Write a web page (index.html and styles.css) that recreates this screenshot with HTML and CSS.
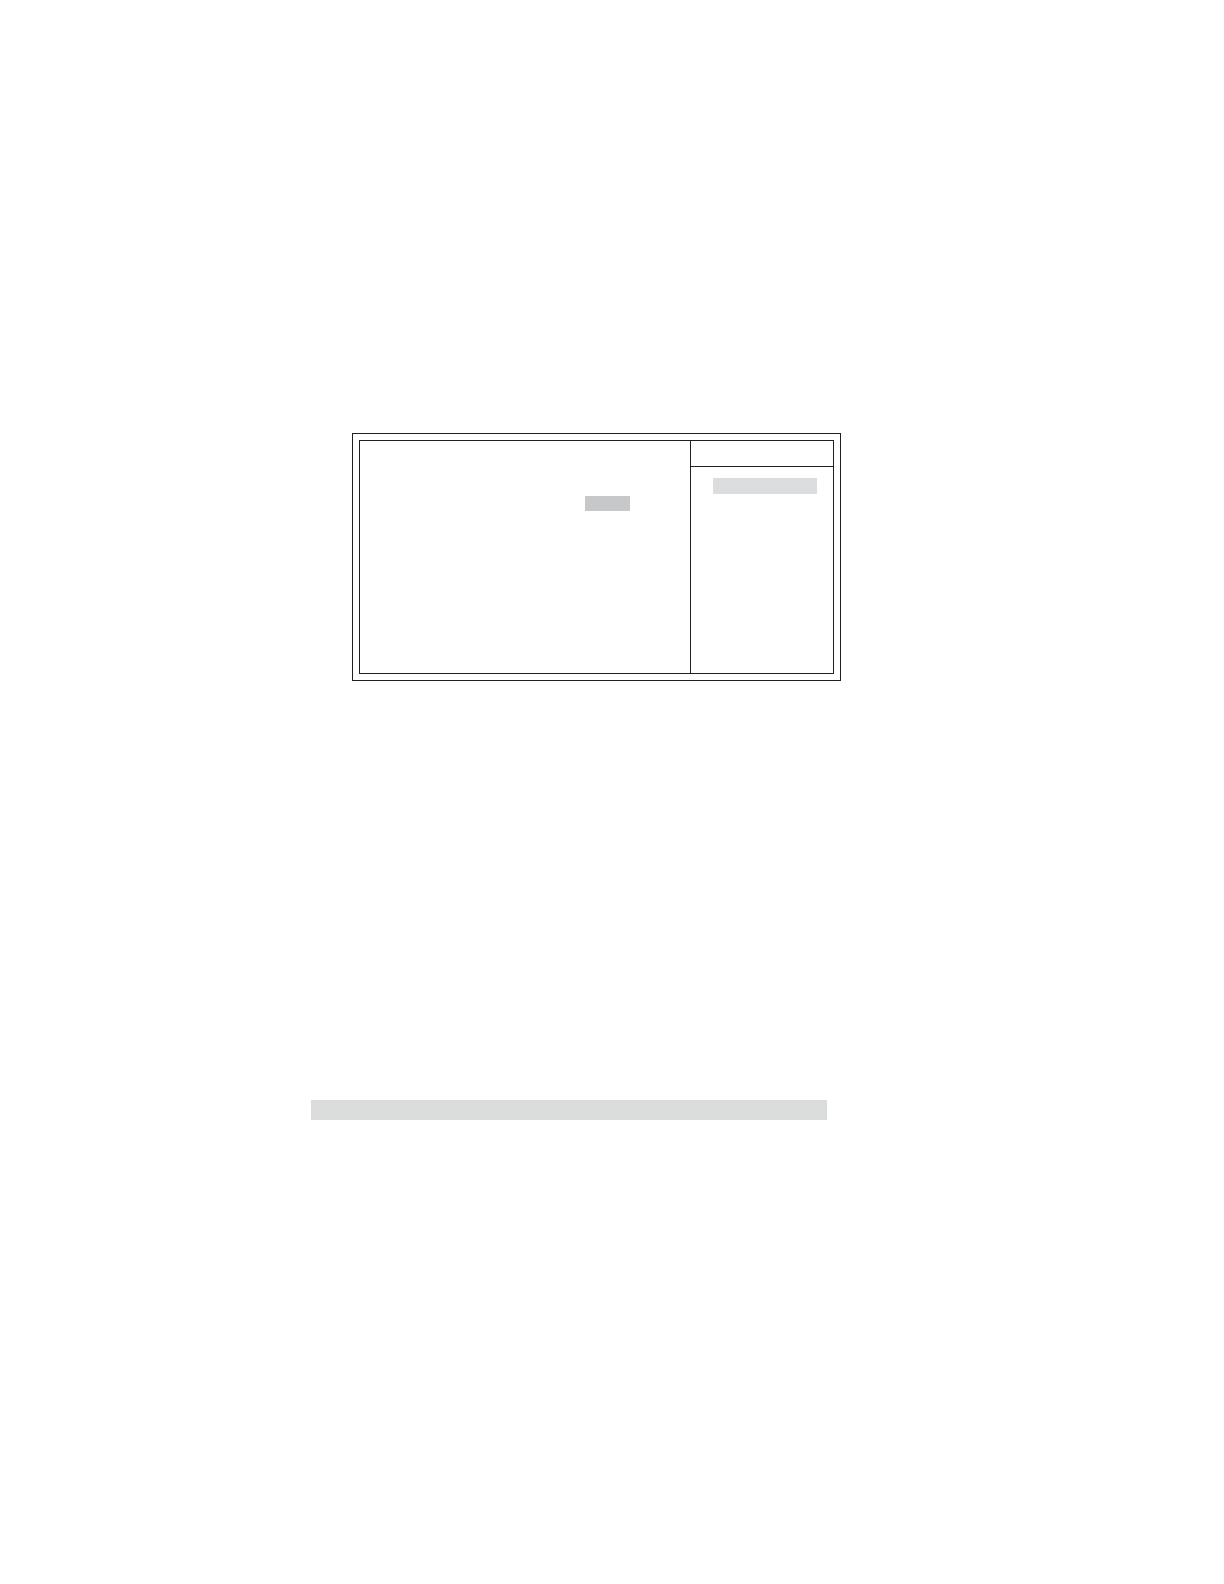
FILE: index.html
```html
<!doctype html>
<html lang="en">
    <head>
        <meta charset="UTF-8"/>
        <title>Setup menu</title>
        <link rel="stylesheet" href="styles.css">
    </head>
    <body>
    <div id="page">
        <div class="screen">
            <div class="inner">
                <div class="options">
                    <div class="selected"></div>
                </div>
                <div class="help">
                    <div class="help-title"></div>
                    <div class="help-body">
                        <div class="menu-level"></div>
                    </div>
                </div>
            </div>
        </div>
        <div class="note"></div>
    </div>
    </body>
</html>
```

FILE: styles.css
```css
* {
    margin: 0px;
    padding: 0px;
    box-sizing: border-box;
}
body {
    background-color: #fff;
}
#page {
    display: grid;
    grid-template-columns: 311fr 41fr 475fr 14fr 383fr;
    align-content: start;
    row-gap: 419px;
    min-height: 100vh;
    padding-top: 433px;
}
/* double frame */
.screen {
    grid-column: 3 / 5;
    border: 1px solid #231f20;
    padding: 6px;
}
.inner {
    display: grid;
    grid-template-columns: 330fr 143fr;
    min-height: 234px;
    border: 1px solid #231f20;
}
.options {
    padding: 55px 60px 0px 0px;
}
.selected {
    width: 45px;
    height: 15px;
    margin-left: auto;
    background-color: #c7c8c9;
}
.help {
    border-left: 1px solid #231f20;
}
.help-title {
    height: 26px;
    border-bottom: 1px solid #231f20;
}
.help-body {
    padding: 11px 16px 0px 22px;
}
.menu-level {
    height: 16px;
    background-color: #dcddde;
}
.note {
    grid-column: 2 / 4;
    height: 20px;
    background-color: #dbdddd;
}
```
